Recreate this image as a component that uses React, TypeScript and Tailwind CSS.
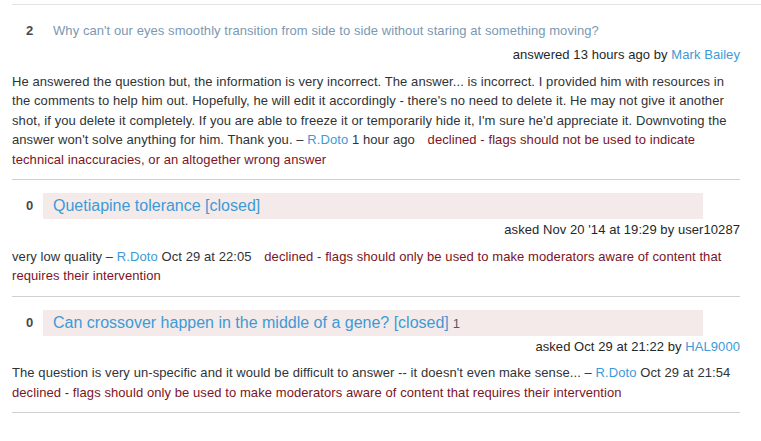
import React from 'react';

const link = 'text-[#3d9ad6]';

interface FlagItemProps {
  score: number;
  title: React.ReactNode;
  closed?: boolean;
  meta: React.ReactNode;
  children: React.ReactNode;
}

const FlagItem: React.FC<FlagItemProps> = ({ score, title, closed, meta, children }) => {
  return (
    <div className="border-b border-[#d0d0d0] pt-[13px] pb-[10px]">
      <div className="flex items-center h-[26px]">
        <div className="w-[31px] pl-[14px] text-[13px] font-bold text-[#45494d]">{score}</div>
        {closed ? (
          <div className="w-[660px] h-[26px] bg-[#f4eaea] pl-[10px] flex items-center text-[16px]">
            {title}
          </div>
        ) : (
          <div className="pl-[10px] text-[13px] tracking-[0.07px]">{title}</div>
        )}
      </div>
      <div className="text-right text-[13px] leading-[19.5px] pt-[1px] tracking-[0.07px] text-[#242729]">
        {meta}
      </div>
      <div className="mt-[7px] text-[13px] leading-[19.5px] tracking-[0.08px] text-[#303336]">{children}</div>
    </div>
  );
};

// wide gap before the moderator's response; collapses at a line end
const Gap = () => <span className="[word-spacing:9px]"> </span>;

const Declined: React.FC<{ children: React.ReactNode }> = ({ children }) => (
  <span className="text-[#7b1424]">{children}</span>
);

export default function App() {
  return (
    <div className="bg-white w-[761px] h-[441px] overflow-hidden pl-[12px] pt-[4px] font-['Liberation_Sans',Arial,sans-serif]">
      <div className="border-t border-[#e4e4e4]" />
      <div className="w-[728px]">
        <FlagItem
          score={2}
          title={
            <span className="text-[#7b98b2]">
              Why can't our eyes smoothly transition from side to side without staring at something moving?
            </span>
          }
          meta={
            <>
              answered 13 hours ago by <span className={link}>Mark Bailey</span>
            </>
          }
        >
          He answered the question but, the information is very incorrect. The answer... is incorrect. I
          provided him with resources in the comments to help him out. Hopefully, he will edit it accordingly -
          there's no need to delete it. He may not give it another shot, if you delete it completely. If you are
          able to freeze it or temporarily hide it, I'm sure he'd appreciate it. Downvoting the answer won't solve
          anything for him. Thank you. – <span className={link}>R.Doto</span> 1 hour ago
          <Gap />
          <Declined>
            declined - flags should not be used to indicate technical inaccuracies, or an altogether wrong answer
          </Declined>
        </FlagItem>

        <FlagItem
          score={0}
          closed
          title={<span className={link}>Quetiapine tolerance [closed]</span>}
          meta={<>asked Nov 20 '14 at 19:29 by user10287</>}
        >
          very low quality – <span className={link}>R.Doto</span> Oct 29 at 22:05
          <Gap />
          <Declined>
            declined - flags should only be used to make moderators aware of content that requires their
            intervention
          </Declined>
        </FlagItem>

        <FlagItem
          score={0}
          closed
          title={
            <>
              <span className={link}>Can crossover happen in the middle of a gene? [closed]</span>
              <span className="text-[13px] text-[#555a5f] ml-[4px] mt-[3px]">1</span>
            </>
          }
          meta={
            <>
              asked Oct 29 at 21:22 by <span className={link}>HAL9000</span>
            </>
          }
        >
          The question is very un-specific and it would be difficult to answer -- it doesn't even make sense... –{' '}
          <span className={link}>R.Doto</span> Oct 29 at 21:54
          <Gap />
          <Declined>
            declined - flags should only be used to make moderators aware of content that requires their
            intervention
          </Declined>
        </FlagItem>
      </div>
    </div>
  );
}
